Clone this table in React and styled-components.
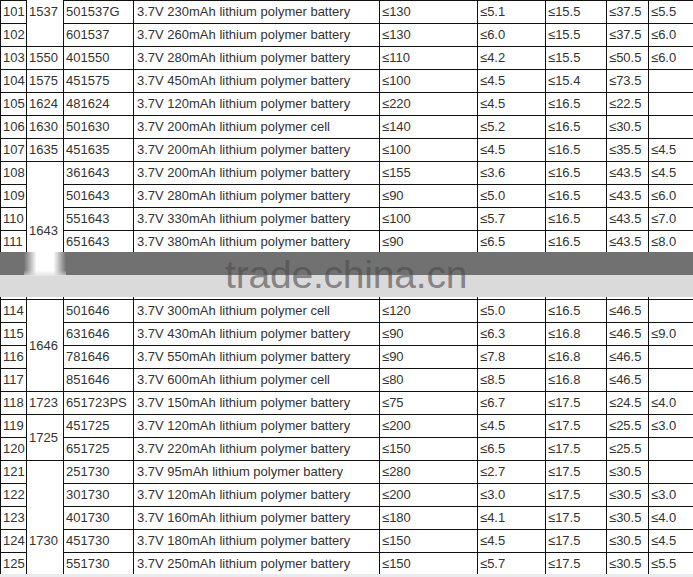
import React from 'react';
import styled, { createGlobalStyle } from 'styled-components';

const GlobalStyle = createGlobalStyle`
    html, body {
        margin: 0;
        padding: 0;
        background: #e9ebee;
    }
`;

const Sheet = styled('div')`
    position: relative;
    width: 693px;
    height: 574px;
    overflow: hidden;
    background: #fff;
`;

const Table = styled('table')`
    border-collapse: collapse;
    table-layout: fixed;
    width: 708px;
    margin-top: -23px;
    font-family: 'Liberation Sans', Arial, sans-serif;
    font-size: 13px;
    color: #333;
`;

const Cell = styled('td')`
    height: 22px;
    padding: 0 2px;
    border: 1px solid #111;
    white-space: nowrap;
    overflow: hidden;
    vertical-align: middle;
    line-height: 22px;
    padding-left: ${props => props.indent || 2}px;
`;

// grey band laid over the sheet, the site's watermark
const Watermark = styled('div')`
    position: absolute;
    left: 0;
    right: 0;
    top: 252px;
    height: 45px;
    padding-left: 225px;
    box-sizing: border-box;
    background:
        linear-gradient(to bottom, rgba(255,255,255,0) 0, rgba(255,255,255,0) 70%, #dadada 100%) 24px 0 / 42px 26px no-repeat,
        linear-gradient(to right, rgba(255,255,255,0) 0, #fff 30%, #fff 70%, rgba(255,255,255,0) 100%) 24px 0 / 42px 24px no-repeat,
        linear-gradient(to bottom, #717171 0, #717171 23px, #dadada 23px, #dadada 100%);
    font-family: 'Liberation Sans', Arial, sans-serif;
    font-size: 39px;
    line-height: 45px;
    letter-spacing: -0.2px;
    color: rgba(75, 75, 75, 0.62);
    white-space: nowrap;
`;

const widths = [26, 37, 70, 246, 98, 68, 61, 42, 60];

const blank = ['', '', '', '', '', '', ''];

// [no, group, rowspan, model, description, cap, thick, width, length, extra]
const rows = [
    ['', '1537', 3, ...blank],
    ['101', null, 0, '501537G', '3.7V 230mAh lithium polymer battery', '≤130', '≤5.1', '≤15.5', '≤37.5', '≤5.5'],
    ['102', null, 0, '601537', '3.7V 260mAh lithium polymer battery', '≤130', '≤6.0', '≤15.5', '≤37.5', '≤6.0'],
    ['103', '1550', 1, '401550', '3.7V 280mAh lithium polymer battery', '≤110', '≤4.2', '≤15.5', '≤50.5', '≤6.0'],
    ['104', '1575', 1, '451575', '3.7V 450mAh lithium polymer battery', '≤100', '≤4.5', '≤15.4', '≤73.5', ''],
    ['105', '1624', 1, '481624', '3.7V 120mAh lithium polymer battery', '≤220', '≤4.5', '≤16.5', '≤22.5', ''],
    ['106', '1630', 1, '501630', '3.7V 200mAh lithium polymer cell', '≤140', '≤5.2', '≤16.5', '≤30.5', ''],
    ['107', '1635', 1, '451635', '3.7V 200mAh lithium polymer battery', '≤100', '≤4.5', '≤16.5', '≤35.5', '≤4.5'],
    ['108', '1643', 6, '361643', '3.7V 200mAh lithium polymer battery', '≤155', '≤3.6', '≤16.5', '≤43.5', '≤4.5'],
    ['109', null, 0, '501643', '3.7V 280mAh lithium polymer battery', '≤90', '≤5.0', '≤16.5', '≤43.5', '≤6.0'],
    ['110', null, 0, '551643', '3.7V 330mAh lithium polymer battery', '≤100', '≤5.7', '≤16.5', '≤43.5', '≤7.0'],
    ['111', null, 0, '651643', '3.7V 380mAh lithium polymer battery', '≤90', '≤6.5', '≤16.5', '≤43.5', '≤8.0'],
    [' ', null, 0, ...blank],
    ['  ', null, 0, ...blank],
    ['114', '1646', 4, '501646', '3.7V 300mAh lithium polymer cell', '≤120', '≤5.0', '≤16.5', '≤46.5', ''],
    ['115', null, 0, '631646', '3.7V 430mAh lithium polymer battery', '≤90', '≤6.3', '≤16.8', '≤46.5', '≤9.0'],
    ['116', null, 0, '781646', '3.7V 550mAh lithium polymer battery', '≤90', '≤7.8', '≤16.8', '≤46.5', ''],
    ['117', null, 0, '851646', '3.7V 600mAh lithium polymer cell', '≤80', '≤8.5', '≤16.8', '≤46.5', ''],
    ['118', '1723', 1, '651723PS', '3.7V 150mAh lithium polymer battery', '≤75', '≤6.7', '≤17.5', '≤24.5', '≤4.0'],
    ['119', '1725', 2, '451725', '3.7V 120mAh lithium polymer battery', '≤200', '≤4.5', '≤17.5', '≤25.5', '≤3.0'],
    ['120', null, 0, '651725', '3.7V 220mAh lithium polymer battery', '≤150', '≤6.5', '≤17.5', '≤25.5', ''],
    ['121', '1730', 7, '251730', '3.7V 95mAh lithium polymer battery', '≤280', '≤2.7', '≤17.5', '≤30.5', ''],
    ['122', null, 0, '301730', '3.7V 120mAh lithium polymer battery', '≤200', '≤3.0', '≤17.5', '≤30.5', '≤3.0'],
    ['123', null, 0, '401730', '3.7V 160mAh lithium polymer battery', '≤180', '≤4.1', '≤17.5', '≤30.5', '≤4.0'],
    ['124', null, 0, '451730', '3.7V 180mAh lithium polymer battery', '≤150', '≤4.5', '≤17.5', '≤30.5', '≤4.5'],
    ['125', null, 0, '551730', '3.7V 250mAh lithium polymer battery', '≤150', '≤5.7', '≤17.5', '≤30.5', '≤5.5'],
    ['   ', null, 0, ...blank],
    ['    ', null, 0, ...blank],
];

const App = () => (
    <>
        <GlobalStyle />
        <Sheet>
            <Table>
                <colgroup>
                    {widths.map((w, i) => <col key={i} style={{ width: w }} />)}
                </colgroup>
                <tbody>
                    {rows.map(([no, group, span, ...rest], r) => (
                        <tr key={r}>
                            <Cell>{no.trim()}</Cell>
                            {group && <Cell rowSpan={span}>{group}</Cell>}
                            {rest.map((v, i) => (
                                <Cell key={i} indent={i === 1 ? 3 : 2}>{v}</Cell>
                            ))}
                        </tr>
                    ))}
                </tbody>
            </Table>
            <Watermark>trade.china.cn</Watermark>
        </Sheet>
    </>
);

export default App;
